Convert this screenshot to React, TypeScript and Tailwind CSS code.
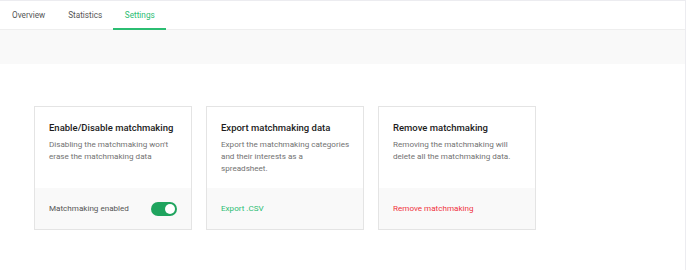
export default function App() {
  const font = { fontFamily: 'Roboto, "Liberation Sans", sans-serif' }
  return (
    <div className="w-[686px] h-[270px] bg-white overflow-hidden" style={font}>
      <div className="border-t border-r border-[#ececf0] h-full">
        <div className="h-[29px] flex items-stretch border-b border-[#eeeeee] text-[8.2px] text-[#555] pl-[12px]">
          <div className="flex items-center">Overview</div>
          <div className="flex items-center ml-[23px]">Statistics</div>
          <div className="flex items-center justify-center text-[#2bbd72] border-b-2 border-[#2bbd72] ml-[11px] w-[53px] mb-[-1px] pt-[2px]">
            Settings
          </div>
        </div>
        <div className="h-[34px] bg-[#f9f9f9]" />
        <div className="flex gap-[14px] pl-[34px] pt-[42px]">
          <Card
            title="Enable/Disable matchmaking"
            desc="Disabling the matchmaking won't erase the matchmaking data"
            footer={
              <div className="flex items-center justify-between w-full pr-[2px]">
                <span className="text-[#555]">Matchmaking enabled</span>
                <div className="w-[26px] h-[14px] rounded-full bg-[#1fa45e] flex items-center justify-end pr-[2px]">
                  <div className="w-[10px] h-[10px] rounded-full bg-white" />
                </div>
              </div>
            }
          />
          <Card
            title="Export matchmaking data"
            desc="Export the matchmaking categories and their interests as a spreadsheet."
            footer={<span className="text-[#2bbd72]">Export .CSV</span>}
          />
          <Card
            title="Remove matchmaking"
            desc="Removing the matchmaking will delete all the matchmaking data."
            footer={<span className="text-[#f0333d]">Remove matchmaking</span>}
          />
        </div>
      </div>
    </div>
  )
}

function Card({ title, desc, footer }: { title: string; desc: string; footer: React.ReactNode }) {
  return (
    <div className="w-[158px] h-[124px] border border-[#e4e4e4] flex flex-col">
      <div className="flex-1 pl-[14px] pr-[12px] pt-[15px] bg-white">
        <div className="text-[9.5px] font-medium text-[#1c1c1c] leading-[12px]">{title}</div>
        <div className="mt-[4px] text-[8.1px] leading-[12px] text-[#727272]">{desc}</div>
      </div>
      <div className="h-[41px] bg-[#f9f9f9] pl-[14px] pr-[12px] flex items-center text-[8.1px]">{footer}</div>
    </div>
  )
}
